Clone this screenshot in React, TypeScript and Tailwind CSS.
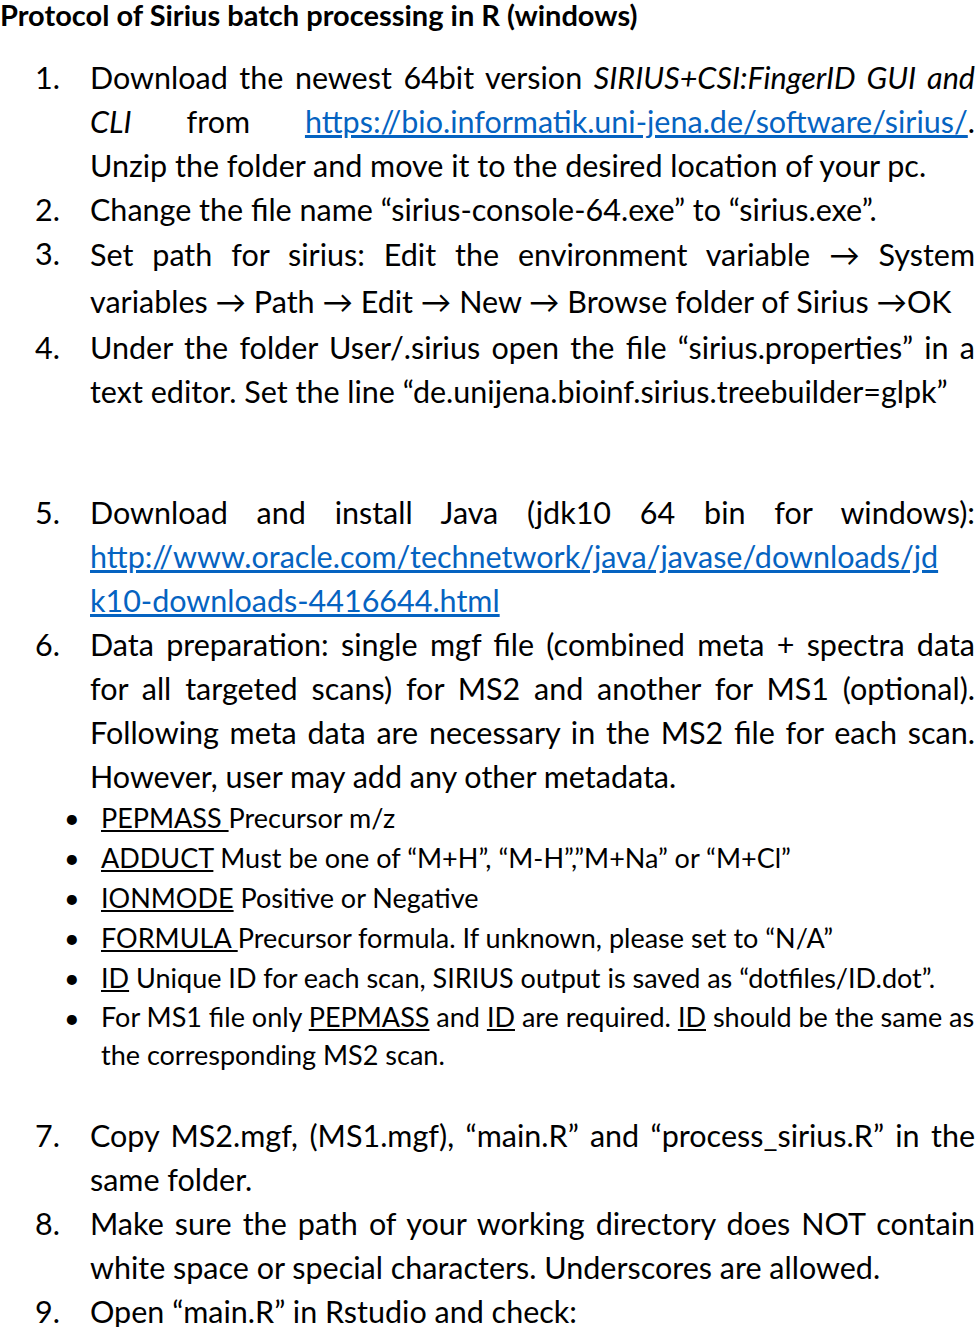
const F = { fontFamily: "Lato, 'Open Sans', sans-serif" };

function L({ children, j = false, h = 44 }: { children: React.ReactNode; j?: boolean; h?: number }) {
  return (
    <div
      className={"whitespace-nowrap " + (j ? "text-justify [text-align-last:justify]" : "")}
      style={{ height: h, lineHeight: h + "px" }}
    >
      {children}
    </div>
  );
}

function Item({ n, children }: { n: string; children: React.ReactNode }) {
  return (
    <div className="flex">
      <div className="w-[90px] pl-[35px] shrink-0" style={{ lineHeight: "44px" }}>{n}</div>
      <div className="flex-1 pr-[2px]">{children}</div>
    </div>
  );
}

function B({ children, h = 40 }: { children: React.ReactNode; h?: number }) {
  return (
    <div className="flex text-[27px]">
      <div className="w-[101px] pl-[64px] shrink-0" style={{ lineHeight: "40px" }}>•</div>
      <div className="flex-1" style={{ lineHeight: h + "px" }}>{children}</div>
    </div>
  );
}

const link = "text-[#0563c1] underline";

export default function App() {
  return (
    <div className="w-[977px] h-[1327px] bg-white text-black text-[30.5px] overflow-hidden pt-[3px]" style={F}>
      <div className="font-bold text-[29px] h-[30px] leading-[24px] whitespace-nowrap">Protocol of Sirius batch processing in R (windows)</div>
      <div className="h-[22px]" />
      <Item n="1.">
        <L j>Download the newest 64bit version <i>SIRIUS+CSI:FingerID GUI and</i></L>
        <L j><i>CLI</i> from <span className={link}>https://bio.informatik.uni-jena.de/software/sirius/</span>.</L>
        <L>Unzip the folder and move it to the desired location of your pc.</L>
      </Item>
      <Item n="2."><L>Change the file name “sirius-console-64.exe” to “sirius.exe”.</L></Item>
      <Item n="3.">
        <L j h={46}>Set path for sirius: Edit the environment variable → System</L>
        <L h={48}>variables → Path → Edit → New → Browse folder of Sirius →OK</L>
      </Item>
      <Item n="4.">
        <L j>Under the folder User/.sirius open the file “sirius.properties” in a</L>
        <L>text editor. Set the line “de.unijena.bioinf.sirius.treebuilder=glpk”</L>
      </Item>
      <div className="h-[77px]" />
      <Item n="5.">
        <L j>Download and install Java (jdk10 64 bin for windows):</L>
        <L><span className={link}>http://www.oracle.com/technetwork/java/javase/downloads/jd</span></L>
        <L><span className={link}>k10-downloads-4416644.html</span></L>
      </Item>
      <Item n="6.">
        <L j>Data preparation: single mgf file (combined meta + spectra data</L>
        <L j>for all targeted scans) for MS2 and another for MS1 (optional).</L>
        <L j>Following meta data are necessary in the MS2 file for each scan.</L>
        <L>However, user may add any other metadata.</L>
      </Item>
      <B><span className="underline">PEPMASS </span>Precursor m/z</B>
      <B><span className="underline">ADDUCT</span> Must be one of “M+H”, “M-H”,”M+Na” or “M+Cl”</B>
      <B><span className="underline">IONMODE</span> Positive or Negative</B>
      <B><span className="underline">FORMULA </span>Precursor formula. If unknown, please set to “N/A”</B>
      <B><span className="underline">ID</span> Unique ID for each scan, SIRIUS output is saved as “dotfiles/ID.dot”.</B>
      <B h={38}>
        <div className="whitespace-nowrap">For MS1 file only <span className="underline">PEPMASS</span> and <span className="underline">ID</span> are required. <span className="underline">ID</span> should be the same as</div>
        <div>the corresponding MS2 scan.</div>
      </B>
      <div className="h-[39px]" />
      <Item n="7.">
        <L j>Copy MS2.mgf, (MS1.mgf), “main.R” and “process_sirius.R” in the</L>
        <L>same folder.</L>
      </Item>
      <Item n="8.">
        <L j>Make sure the path of your working directory does NOT contain</L>
        <L>white space or special characters. Underscores are allowed.</L>
      </Item>
      <Item n="9."><L>Open “main.R” in Rstudio and check:</L></Item>
    </div>
  );
}
